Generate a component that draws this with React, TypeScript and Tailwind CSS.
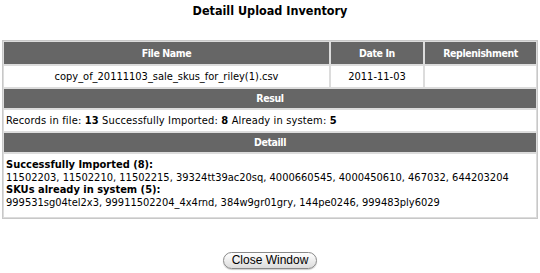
export default function App() {
  const font = { fontFamily: '"DejaVu Sans Condensed", "DejaVu Sans", Verdana, sans-serif' };
  const head = "bg-[#666666] text-white font-bold text-center text-[10.5px] tracking-[-0.4px]";
  return (
    <div className="w-[540px] h-[273px] bg-white text-[11px] text-black" style={font}>
      <div className="pt-[3px] text-center font-bold text-[12.5px] leading-[16px]">Detaill Upload Inventory</div>
      <div className="mx-[2px] mt-[21px] border border-[#c8c8c8] bg-[#dcdcdc] p-px">
        <div className="grid grid-cols-[325px_92px_1fr] gap-[2px]">
          <div className={`${head} h-[22px] leading-[22px]`}>File Name</div>
          <div className={`${head} h-[22px] leading-[22px]`}>Date In</div>
          <div className={`${head} h-[22px] leading-[22px]`}>Replenishment</div>
          <div className="bg-white text-center h-[21px] leading-[21px]">copy_of_20111103_sale_skus_for_riley(1).csv</div>
          <div className="bg-white text-center h-[21px] leading-[21px]">2011-11-03</div>
          <div className="bg-white h-[21px]"></div>
        </div>
        <div className={`${head} mt-[2px] h-[19px] leading-[19px]`}>Resul</div>
        <div className="mt-[2px] bg-white h-[21px] leading-[21px] px-[2px] tracking-[0.15px]">
          Records in file: <b>13</b> Successfully Imported: <b>8</b> Already in system: <b>5</b>
        </div>
        <div className={`${head} mt-[2px] h-[19px] leading-[19px]`}>Detaill</div>
        <div className="mt-[2px] bg-white px-[2px] pt-[5px] pb-[8px] leading-[12.5px]">
          <div className="font-bold">Successfully Imported (8):</div>
          <div>11502203, 11502210, 11502215, 39324tt39ac20sq, 4000660545, 4000450610, 467032, 644203204</div>
          <div className="font-bold">SKUs already in system (5):</div>
          <div>999531sg04tel2x3, 99911502204_4x4rnd, 384w9gr01gry, 144pe0246, 999483ply6029</div>
        </div>
      </div>
      <div className="mt-[33px] flex justify-center">
        <button className="h-[17px] px-[8px] rounded-full border border-[#8a8a8a] bg-gradient-to-b from-white to-[#dcdcdc] leading-[15px] text-black shadow-[0_1px_1px_rgba(0,0,0,0.2)]" style={{ fontFamily: '"Liberation Sans", Arial, sans-serif', fontSize: '12px' }}>
          Close Window
        </button>
      </div>
    </div>
  );
}
